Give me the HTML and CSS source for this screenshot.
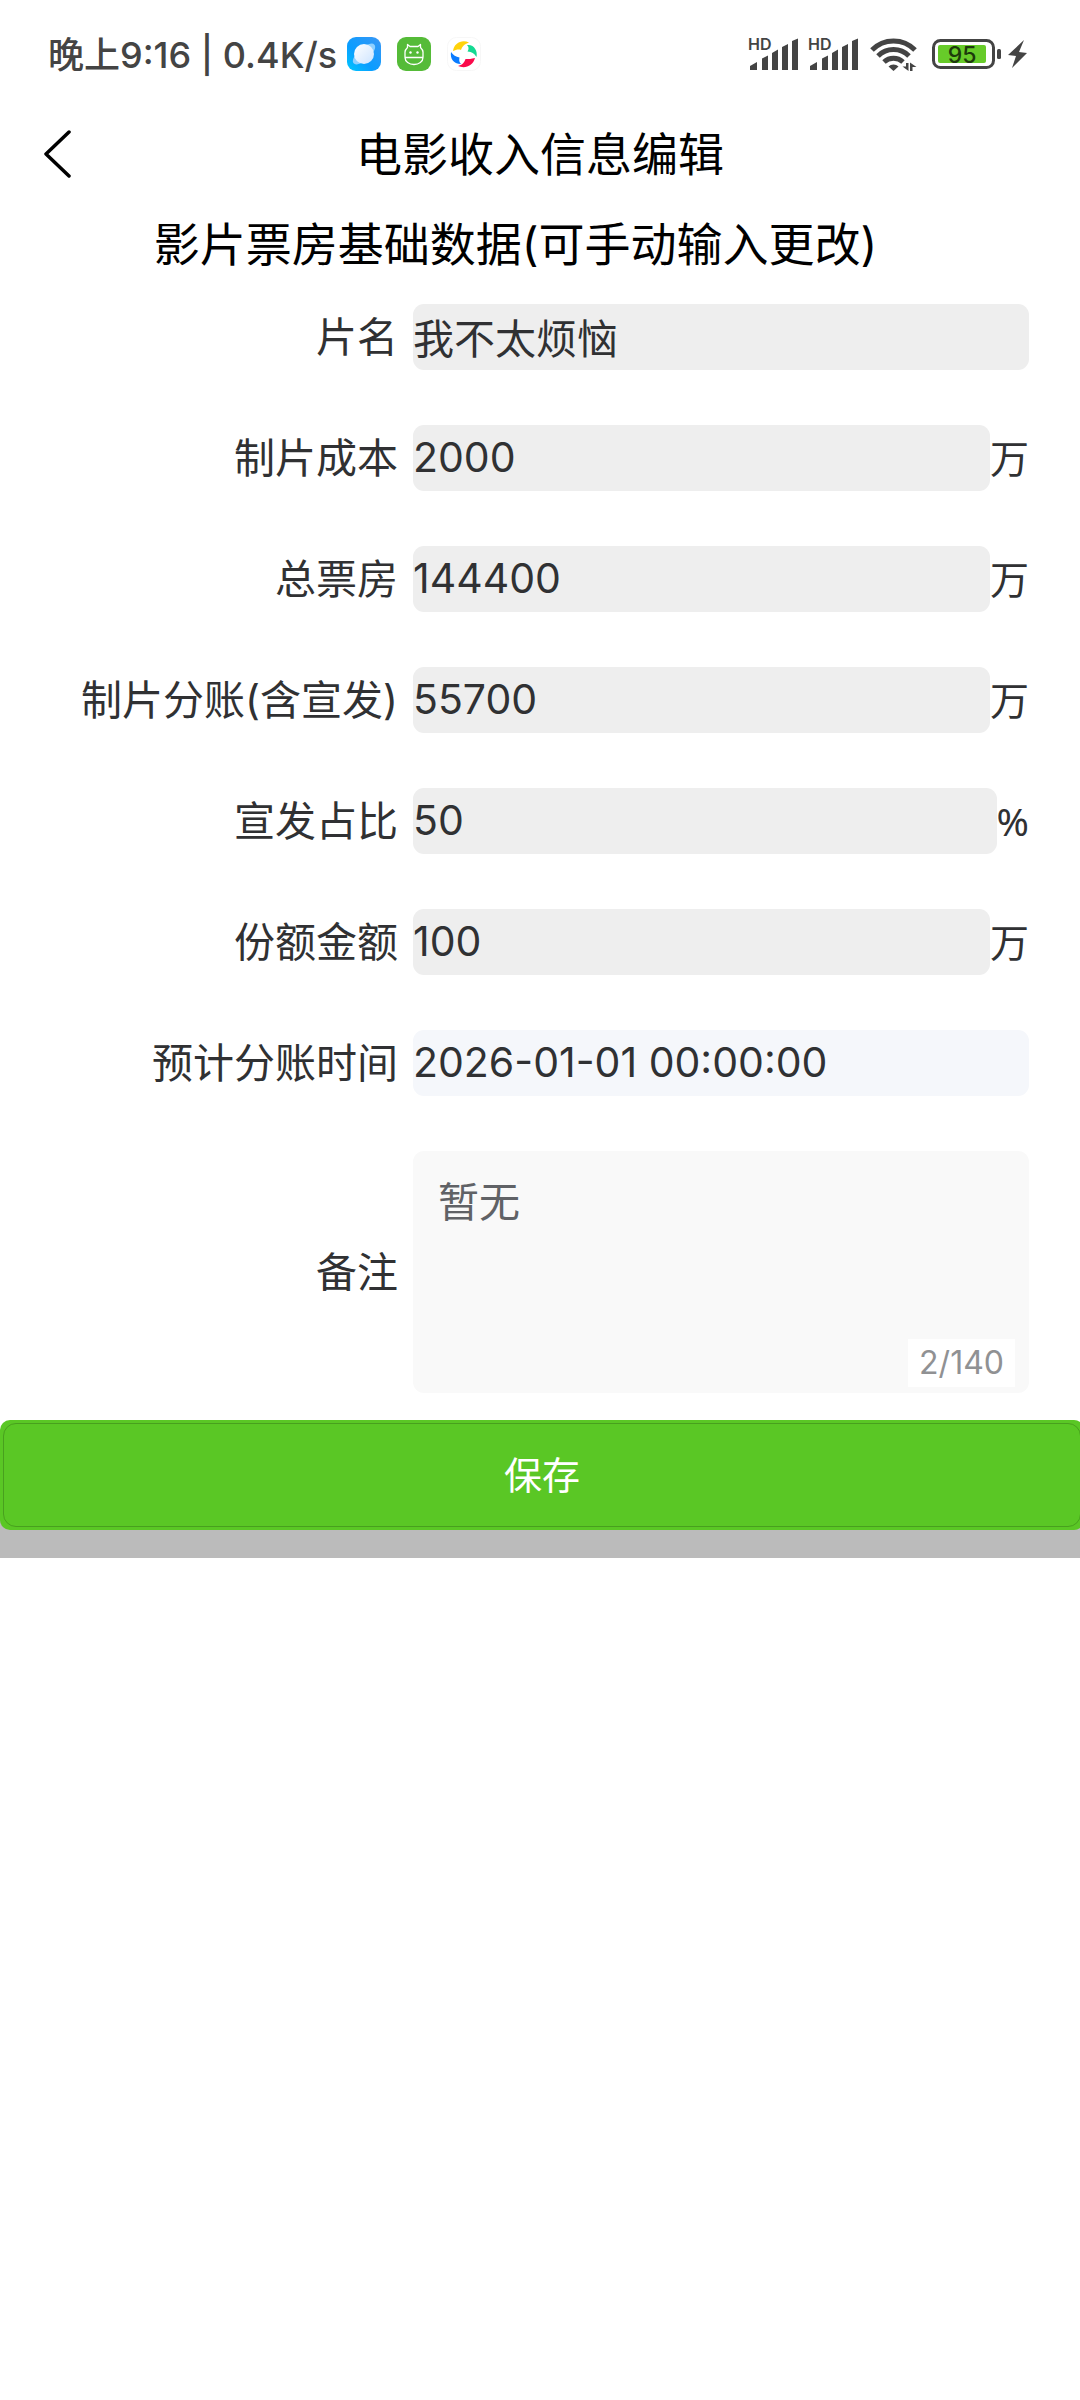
FILE: index.html
```html
<!DOCTYPE html>
<html lang="zh-CN">
<head>
    <meta charset="UTF-8">
    <meta name="viewport" content="width=device-width, initial-scale=1.0">
    <title>电影收入信息编辑</title>
    <link rel="stylesheet" href="styles.css">
</head>
<body>

    <div class="status-bar">
        <span class="status-text">晚上9:16 | 0.4K/s</span>
        <div class="status-apps">
            <svg width="34" height="34" viewBox="0 0 34 34">
                <defs>
                    <linearGradient id="sky" x1="0" y1="1" x2="1" y2="0">
                        <stop offset="0" stop-color="#00c8ff"/>
                        <stop offset="0.4" stop-color="#0a9dff"/>
                        <stop offset="1" stop-color="#3a97f5"/>
                    </linearGradient>
                    <linearGradient id="planet" x1="0" y1="0" x2="1" y2="1">
                        <stop offset="0" stop-color="#ffffff"/>
                        <stop offset="1" stop-color="#cde4ff"/>
                    </linearGradient>
                </defs>
                <rect width="34" height="34" rx="9" fill="url(#sky)"/>
                <ellipse cx="17" cy="17" rx="14" ry="6" transform="rotate(-42 17 17)" fill="#8fd0ff"/>
                <circle cx="17" cy="17" r="10" fill="url(#planet)"/>
            </svg>
            <svg width="34" height="34" viewBox="0 0 34 34">
                <rect width="34" height="34" rx="9" fill="#55bb38"/>
                <path d="M8 20.500h18c0 4-4 7-9 7s-9-3-9-7zM8 20v-5c0-2 1-3 2.500-4.500V7.500l2.500 2h8l2.500-2v3C25 12 26 13 26 15v5" fill="none" stroke="#fff" stroke-width="1.300" stroke-linejoin="round"/>
                <circle cx="13.500" cy="15.500" r="1.200" fill="#fff"/>
                <circle cx="20.500" cy="15.500" r="1.200" fill="#fff"/>
            </svg>
            <svg width="34" height="34" viewBox="0 0 34 34">
                <rect x="0.500" y="0.500" width="33" height="33" rx="9" fill="#fff" stroke="#f7f7f7"/>
                <path d="M6 14C7 6 15 2 22 5.500C17 7 15 10 14 13C11 12 9 13 6 14z" fill="#ffd20a"/>
                <path d="M20 8c7-1 11 6 9.500 12C27 16 25 15 20.500 14.500C22 12 22 10 20 8z" fill="#14d992"/>
                <path d="M28 21C26 29 18 32 11 29C15 28 17 26 18.500 22C22 22 24 22 28 21z" fill="#fa0a4b"/>
                <path d="M4 15C3 21 6 27 14 27C12 25 12 23 12.500 20.500C9 20 6 18 4 15z" fill="#0a7bff"/>
            </svg>
        </div>
        <svg class="status-system" width="284" height="48" viewBox="744 30 284 48" fill="#444">
            <g id="signal">
                <text x="748" y="50" class="hd">HD</text>
                <path d="M750 70v-4l7-4v8zM762 70V58.500l6-3V70zM772 70V53l6-3.500V70zM782 70V47l6-3V70zM792 70V41l6-2.500V70z"/>
            </g>
            <use href="#signal" x="60"/>
            <g fill="none" stroke="#444" stroke-width="5">
                <path d="M872 50a30 30 0 0 1 43 0"/>
                <path d="M878 56a22 22 0 0 1 31 0"/>
                <path d="M884 62a14 14 0 0 1 19 0"/>
            </g>
            <path d="M888.500 66.500a7 7 0 0 1 10 0l-5 4.500z"/>
            <path d="M906 63h2.500v8l-6-4.500h3.500zM910 71h2.500v-4h4l-6.500-4.500z"/>
            <rect x="933.500" y="40.500" width="60" height="27" rx="7" fill="none" stroke="#444" stroke-width="3"/>
            <rect x="938" y="45" width="48" height="18" rx="2" fill="#67cb29"/>
            <text x="962" y="62.500" class="battery" text-anchor="middle">95</text>
            <rect x="997" y="49" width="4" height="10" rx="1.500"/>
            <path d="M1024 40l-16 15 8 1-4 12 15-15-8-1z"/>
        </svg>
    </div>

    <header class="nav">
        <button type="button" class="back" aria-label="返回">
            <svg width="28" height="48" viewBox="0 0 28 48">
                <path d="M25 2L2 24l23 22" fill="none" stroke="#000" stroke-width="3.500" stroke-linecap="round" stroke-linejoin="round"/>
            </svg>
        </button>
        <h1>电影收入信息编辑</h1>
    </header>

    <h2>影片票房基础数据(可手动输入更改)</h2>

    <form>
        <div class="fields">
            <div class="row">
                <label for="name">片名</label>
                <input type="text" id="name" value="我不太烦恼">
            </div>
            <div class="row">
                <label for="cost">制片成本</label>
                <input type="text" id="cost" value="2000">
                <span class="unit">万</span>
            </div>
            <div class="row">
                <label for="total">总票房</label>
                <input type="text" id="total" value="144400">
                <span class="unit">万</span>
            </div>
            <div class="row">
                <label for="share">制片分账(含宣发)</label>
                <input type="text" id="share" value="55700">
                <span class="unit">万</span>
            </div>
            <div class="row">
                <label for="ratio">宣发占比</label>
                <input type="text" id="ratio" value="50">
                <span class="unit">%</span>
            </div>
            <div class="row">
                <label for="amount">份额金额</label>
                <input type="text" id="amount" value="100">
                <span class="unit">万</span>
            </div>
            <div class="row">
                <label for="time">预计分账时间</label>
                <input type="text" id="time" class="date" value="2026-01-01 00:00:00">
            </div>
            <div class="row">
                <label for="remark">备注</label>
                <div class="remark">
                    <textarea id="remark" maxlength="140">暂无</textarea>
                    <span class="count">2/140</span>
                </div>
            </div>
        </div>
        <div class="footer">
            <button type="submit" class="save">保存</button>
        </div>
    </form>

</body>
</html>
```
FILE: styles.css
```css
* {
    box-sizing: border-box;
}
body {
    margin: 0;
    background-color: #fff;
    color: #303133;
    font-family: Inter, "Noto Sans CJK SC", sans-serif;
    font-size: 41px;
    overflow-x: hidden;
}
input, textarea, button {
    font-family: inherit;
    font-size: inherit;
    color: inherit;
    border: none;
    padding: 0;
}
.status-bar {
    display: flex;
    align-items: center;
    height: 108px;
    padding: 0 52px 0 48px;
}
.status-text {
    padding-bottom: 4px;
    font-size: 36px;
    font-weight: 500;
    color: #444;
}
.status-apps {
    display: flex;
    gap: 16px;
    margin-left: 10px;
}
.status-system {
    margin-left: auto;
}
.hd {
    font-size: 16px;
    font-weight: 600;
}
.battery {
    font-size: 23px;
    font-weight: 500;
    fill: #1d3a0c;
}
.nav {
    display: grid;
    grid-template-columns: 80px 1fr 80px;
    align-items: center;
    height: 92px;
    color: #000;
}
.back {
    display: flex;
    padding-left: 44px;
    background: none;
    cursor: pointer;
}
h1, h2 {
    margin: 0;
    font-size: 46px;
    font-weight: 400;
    color: #000;
    text-align: center;
}
h1 {
    padding-bottom: 6px;
}
h2 {
    padding-right: 49px;
    line-height: 88px;
    margin-bottom: 16px;
}
.fields {
    display: flex;
    flex-direction: column;
    gap: 55px;
    padding-right: 51px;
}
.row {
    display: flex;
    align-items: center;
}
label {
    flex: 0 0 398px;
    margin-right: 15px;
    line-height: 66px;
    text-align: right;
}
input {
    flex: 1;
    min-width: 0;
    height: 66px;
    padding-bottom: 3px;
    background-color: #eee;
    border-radius: 11px;
}
.date {
    background-color: #f5f7fb;
}
.unit {
    font-family: "Noto Sans", "Noto Sans CJK SC", sans-serif;
    font-size: 39px;
    line-height: 66px;
}
.remark {
    flex: 1;
    position: relative;
    display: flex;
}
textarea {
    width: 100%;
    height: 242px;
    padding: 18px 25px;
    background-color: #f9f9f9;
    border-radius: 11px;
    color: #606266;
    resize: none;
}
.count {
    position: absolute;
    right: 14px;
    bottom: 6px;
    padding: 0 11px;
    background-color: #fff;
    color: #909193;
    font-size: 32px;
    line-height: 48px;
}
.footer {
    margin-top: 27px;
    padding-bottom: 28px;
    background: linear-gradient(#fff 50%, #bbb 50%);
    overflow: hidden;
}
.save {
    position: relative;
    display: block;
    width: calc(100% + 4px);
    height: 110px;
    padding-bottom: 6px;
    background-color: #5ac725;
    border-radius: 10px;
    color: #fff;
    font-size: 38px;
    cursor: pointer;
}
.save::after {
    content: "";
    position: absolute;
    inset: 3px;
    border: 1px solid #48a01e;
    border-radius: 13px;
}
```
